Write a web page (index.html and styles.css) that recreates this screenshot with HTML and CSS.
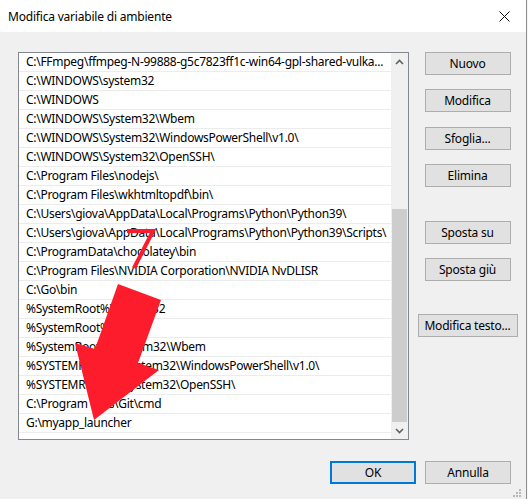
FILE: index.html
```html
<!DOCTYPE html>
<html>
<head>
<meta charset="utf-8">
<link rel="stylesheet" href="styles.css">
</head>
<body>
<div class="dialog">
  <div class="titlebar">
    <span class="title">Modifica variabile di ambiente</span>
    <svg class="close" width="11" height="11" viewBox="0 0 11 11"><path d="M0.5 0.5 L10.5 10.5 M10.5 0.5 L0.5 10.5" stroke="#111" stroke-width="1" fill="none"/></svg>
  </div>
  <div class="main">
    <div class="list">
      <div class="rows">
        <div class="row">C:\FFmpeg\ffmpeg-N-99888-g5c7823ff1c-win64-gpl-shared-vulka...</div>
        <div class="row">C:\WINDOWS\system32</div>
        <div class="row">C:\WINDOWS</div>
        <div class="row">C:\WINDOWS\System32\Wbem</div>
        <div class="row">C:\WINDOWS\System32\WindowsPowerShell\v1.0\</div>
        <div class="row">C:\WINDOWS\System32\OpenSSH\</div>
        <div class="row">C:\Program Files\nodejs\</div>
        <div class="row">C:\Program Files\wkhtmltopdf\bin\</div>
        <div class="row">C:\Users\giova\AppData\Local\Programs\Python\Python39\</div>
        <div class="row">C:\Users\giova\AppData\Local\Programs\Python\Python39\Scripts\</div>
        <div class="row">C:\ProgramData\chocolatey\bin</div>
        <div class="row">C:\Program Files\NVIDIA Corporation\NVIDIA NvDLISR</div>
        <div class="row">C:\Go\bin</div>
        <div class="row">%SystemRoot%\system32</div>
        <div class="row">%SystemRoot%</div>
        <div class="row">%SystemRoot%\System32\Wbem</div>
        <div class="row">%SYSTEMROOT%\System32\WindowsPowerShell\v1.0\</div>
        <div class="row">%SYSTEMROOT%\System32\OpenSSH\</div>
        <div class="row">C:\Program Files\Git\cmd</div>
        <div class="row">G:\myapp_launcher</div>
      </div>
      <div class="scrollbar">
        <div class="sb-arrow"><svg width="9" height="6" viewBox="0 0 9 6"><path d="M1 5 L4.5 1.5 L8 5" stroke="#606060" stroke-width="1.6" fill="none"/></svg></div>
        <div class="sb-track"><div class="sb-thumb"></div></div>
        <div class="sb-arrow"><svg width="9" height="6" viewBox="0 0 9 6"><path d="M1 1 L4.5 4.5 L8 1" stroke="#606060" stroke-width="1.6" fill="none"/></svg></div>
      </div>
    </div>
    <div class="buttons">
      <button class="btn">Nuovo</button>
      <button class="btn gap-s">Modifica</button>
      <button class="btn gap-m">Sfoglia...</button>
      <button class="btn gap-s">Elimina</button>
      <button class="btn gap-l">Sposta su</button>
      <button class="btn gap-s">Sposta giù</button>
      <button class="btn wide gap-l2">Modifica testo...</button>
    </div>
  </div>
  <div class="footer">
    <button class="btn default">OK</button>
    <button class="btn">Annulla</button>
  </div>
  <svg class="annot" width="528" height="499" viewBox="0 0 528 499">
    <polygon points="118,284 161,300 138,363 159,370 94,420 75,343 95,349" fill="#fd1c2c"/>
    <polyline points="127,231 153,231 134,268" stroke="#fd1c2c" stroke-width="4" fill="none" stroke-linejoin="miter"/>
  </svg>
  <svg class="grip" width="9" height="9" viewBox="0 0 9 9">
    <rect x="7" y="1" width="2" height="2" fill="#b8b8b8"/>
    <rect x="4" y="4" width="2" height="2" fill="#b8b8b8"/>
    <rect x="7" y="4" width="2" height="2" fill="#b8b8b8"/>
    <rect x="1" y="7" width="2" height="2" fill="#b8b8b8"/>
    <rect x="4" y="7" width="2" height="2" fill="#b8b8b8"/>
    <rect x="7" y="7" width="2" height="2" fill="#b8b8b8"/>
  </svg>
</div>
<div class="strip"></div>
</body>
</html>
```

FILE: styles.css
```css
html, body {
  margin: 0;
  padding: 0;
}
body {
  display: flex;
  width: 528px;
  height: 499px;
  overflow: hidden;
  background: #f4f4f4;
  font-family: "Noto Sans", "Liberation Sans", sans-serif;
  font-size: 12px;
  color: #000;
}
.dialog {
  position: relative;
  width: 526px;
  height: 499px;
  background: #f0f0f0;
  border-right: 1px solid #8c8c8c;
  display: flex;
  flex-direction: column;
  flex: none;
}
.strip {
  flex: 1;
  background: #f7f7f7;
}
.titlebar {
  height: 32px;
  background: #fff;
  display: flex;
  align-items: center;
  justify-content: space-between;
  padding-left: 8px;
  padding-right: 16px;
  flex: none;
}
.title {
  font-size: 12px;
  letter-spacing: -0.2px;
}
.close {
  display: block;
  margin-top: 1px;
}
.main {
  display: flex;
  padding-top: 20px;
  padding-left: 18px;
}
.list {
  width: 389px;
  height: 386px;
  border: 1px solid #828790;
  background: #fff;
  display: flex;
  flex: none;
}
.rows {
  width: 372px;
  flex: none;
}
.row {
  height: 18px;
  line-height: 18px;
  border-bottom: 1px solid #ececec;
  padding-left: 7px;
  white-space: nowrap;
  overflow: hidden;
  letter-spacing: -0.28px;
}
.scrollbar {
  width: 17px;
  background: #f0f0f0;
  display: flex;
  flex-direction: column;
}
.sb-arrow {
  height: 17px;
  display: flex;
  align-items: center;
  justify-content: center;
}
.sb-track {
  flex: 1;
  display: flex;
  flex-direction: column;
  justify-content: flex-end;
}
.sb-thumb {
  height: 213px;
  margin: 0 1px;
  background: #cdcdcd;
}
.buttons {
  flex: 1;
  display: flex;
  flex-direction: column;
  align-items: center;
}
.btn {
  width: 86px;
  height: 23px;
  padding: 0;
  background: #e1e1e1;
  border: 1px solid #adadad;
  font-family: "Noto Sans", "Liberation Sans", sans-serif;
  font-size: 12px;
  color: #000;
  letter-spacing: -0.2px;
  box-sizing: border-box;
}
.btn.wide {
  width: 100px;
}
.gap-s { margin-top: 14px; }
.gap-m { margin-top: 15px; }
.gap-l { margin-top: 34px; }
.gap-l2 { margin-top: 33px; }
.footer {
  display: flex;
  justify-content: flex-end;
  gap: 9px;
  padding-top: 21px;
  padding-right: 15px;
}
.btn.default {
  border: 2px solid #0078d7;
}
.annot {
  position: absolute;
  left: 0;
  top: 0;
  pointer-events: none;
}
.grip {
  position: absolute;
  right: 5px;
  bottom: 2px;
}
```
